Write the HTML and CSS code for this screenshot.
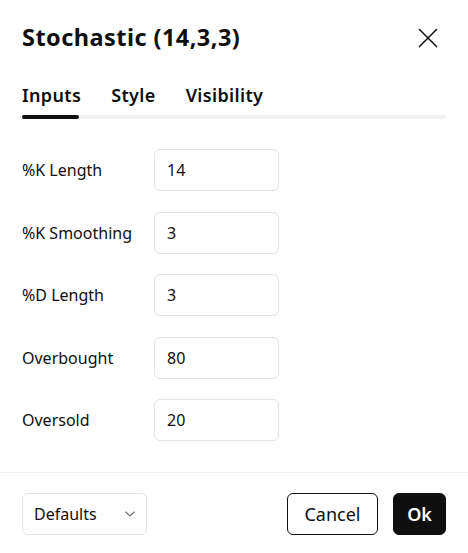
FILE: index.html
```html
<!DOCTYPE html>
<html>
<head>
<meta charset="utf-8">
<link rel="stylesheet" href="styles.css">
</head>
<body>
<div class="dialog">
  <div class="header">
    <h1 class="title">Stochastic (14,3,3)</h1>
    <button class="close" aria-label="Close">
      <svg width="20" height="20" viewBox="0 0 20 20"><path d="M1 1L19 19M19 1L1 19" stroke="#0f0f0f" stroke-width="1.5" fill="none"/></svg>
    </button>
  </div>
  <div class="tabs">
    <div class="tab-list">
      <span class="tab active">Inputs</span>
      <span class="tab">Style</span>
      <span class="tab">Visibility</span>
    </div>
    <div class="tab-track"><div class="tab-indicator"></div></div>
  </div>
  <div class="form">
    <div class="row"><span class="label">%K Length</span><div class="input">14</div></div>
    <div class="row"><span class="label">%K Smoothing</span><div class="input">3</div></div>
    <div class="row"><span class="label">%D Length</span><div class="input">3</div></div>
    <div class="row"><span class="label">Overbought</span><div class="input">80</div></div>
    <div class="row"><span class="label">Oversold</span><div class="input">20</div></div>
  </div>
  <div class="footer">
    <div class="select">
      <span>Defaults</span>
      <svg width="12" height="8" viewBox="0 0 12 8"><path d="M1.5 1.8L6 6L10.5 1.8" stroke="#707070" stroke-width="1.2" fill="none"/></svg>
    </div>
    <div class="actions">
      <button class="btn btn-secondary">Cancel</button>
      <button class="btn btn-primary">Ok</button>
    </div>
  </div>
</div>
</body>
</html>
```

FILE: styles.css
```css
* { box-sizing: border-box; }
html, body { margin: 0; padding: 0; background: #fff; }
body {
  font-family: "Noto Sans", "Open Sans", sans-serif;
  color: #0f0f0f;
  width: 468px;
  height: 553px;
  overflow: hidden;
}
.dialog { display: flex; flex-direction: column; height: 553px; }
.header {
  height: 76px;
  padding: 0 30px 3px 22px;
  display: flex;
  align-items: center;
  justify-content: space-between;
}
.title { margin: 0; font-size: 23.5px; font-weight: 700; line-height: 28px; letter-spacing: 0.45px; }
.close { border: 0; background: none; padding: 0; width: 20px; height: 20px; display: flex; margin-top: 3px; }
.tabs { padding: 0 22px; }
.tab-list { display: flex; gap: 30px; height: 38px; align-items: center; }
.tab { font-size: 18px; font-weight: 600; line-height: 24px; letter-spacing: 0.35px; }
.tab-track { height: 4px; background: #f2f2f2; border-radius: 2px; margin-top: 1px; }
.tab-indicator { width: 57px; height: 4px; background: #0f0f0f; border-radius: 2px; }
.form { padding: 30px 22px 0; display: flex; flex-direction: column; gap: 20.5px; }
.row { display: flex; align-items: center; }
.label { width: 132px; font-size: 16px; }
.input {
  width: 125px;
  height: 42px;
  border: 1px solid #e3e3e3;
  border-radius: 6px;
  padding: 0 12px;
  display: flex;
  align-items: center;
  font-size: 16px;
}
.footer {
  margin-top: auto;
  border-top: 1px solid #f2f2f2;
  padding: 20px 22px 18px;
  display: flex;
  justify-content: space-between;
  align-items: center;
}
.select {
  width: 125px;
  height: 42px;
  border: 1px solid #e3e3e3;
  border-radius: 6px;
  padding: 0 10px 0 11px;
  display: flex;
  align-items: center;
  justify-content: space-between;
  font-size: 16px;
}
.actions { display: flex; gap: 15px; }
.btn {
  height: 42px;
  border-radius: 6px;
  font-family: inherit;
  font-size: 18px;
  padding: 0;
}
.btn-secondary { background: #fff; border: 1px solid #0f0f0f; color: #0f0f0f; width: 91px; }
.btn-primary { background: #0f0f0f; border: 1px solid #0f0f0f; color: #fff; font-weight: 600; width: 53px; }
```
